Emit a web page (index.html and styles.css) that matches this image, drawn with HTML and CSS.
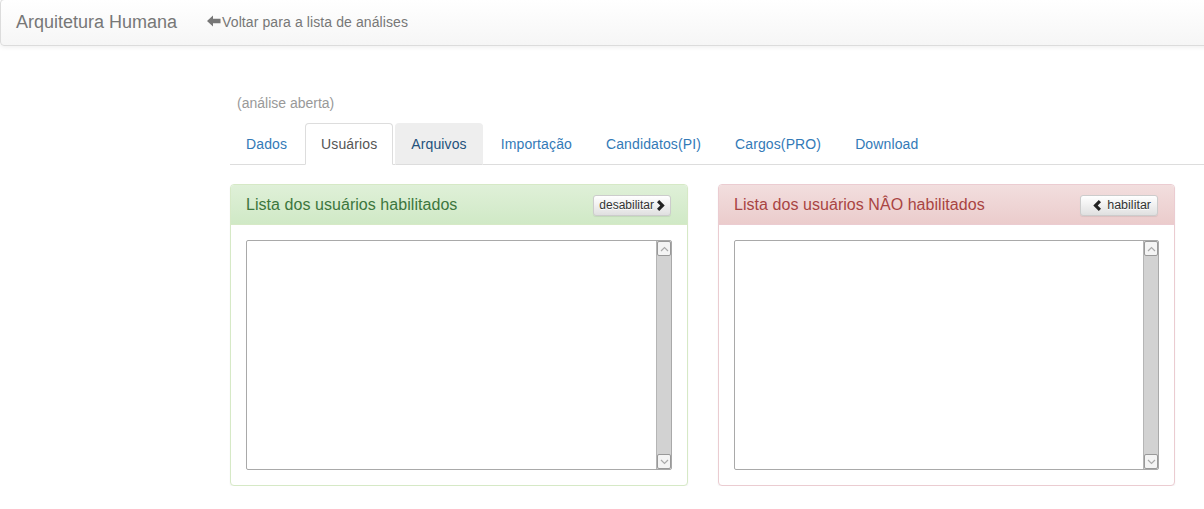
FILE: index.html
```html
<!DOCTYPE html>
<html lang="pt">
<head>
<meta charset="utf-8">
<title>Arquitetura Humana</title>
<link rel="stylesheet" href="styles.css">
</head>
<body>
<nav class="navbar">
  <a class="brand" href="#">Arquitetura Humana</a>
  <a class="back" href="#"><svg class="arrow" width="14" height="12" viewBox="0 0 14 12"><path d="M0 6 L6 0.5 L6 3.8 L13.5 3.8 L13.5 8.2 L6 8.2 L6 11.5 Z" fill="#777"/></svg>Voltar para a lista de análises</a>
</nav>
<main class="main">
  <p class="subtitle">(análise aberta)</p>
  <ul class="tabs">
    <li><a href="#">Dados</a></li>
    <li class="active"><a href="#">Usuários</a></li>
    <li class="hover"><a href="#">Arquivos</a></li>
    <li><a href="#">Importação</a></li>
    <li><a href="#">Candidatos(PI)</a></li>
    <li><a href="#">Cargos(PRO)</a></li>
    <li><a href="#">Download</a></li>
  </ul>
  <div class="panels">
    <section class="panel success">
      <div class="panel-heading">
        <h3>Lista dos usuários habilitados</h3>
        <button class="btn">desabilitar<svg width="9" height="11" viewBox="0 0 9 11"><path d="M1 2.2 L3.2 0 L8.7 5.5 L3.2 11 L1 8.8 L4.3 5.5 Z" fill="#222"/></svg></button>
      </div>
      <div class="panel-body">
        <div class="listbox">
          <div class="list-area"></div>
          <div class="scrollbar">
            <div class="sb-btn"><svg width="9" height="6" viewBox="0 0 9 6"><path d="M1 5 L4.5 1.5 L8 5" fill="none" stroke="#aaa" stroke-width="1.2"/></svg></div>
            <div class="sb-track"></div>
            <div class="sb-btn"><svg width="9" height="6" viewBox="0 0 9 6"><path d="M1 1 L4.5 4.5 L8 1" fill="none" stroke="#aaa" stroke-width="1.2"/></svg></div>
          </div>
        </div>
      </div>
    </section>
    <section class="panel danger">
      <div class="panel-heading">
        <h3>Lista dos usuários NÂO habilitados</h3>
        <button class="btn"><svg width="9" height="11" viewBox="0 0 9 11"><path d="M8 2.2 L5.8 0 L0.3 5.5 L5.8 11 L8 8.8 L4.7 5.5 Z" fill="#222"/></svg> habilitar</button>
      </div>
      <div class="panel-body">
        <div class="listbox">
          <div class="list-area"></div>
          <div class="scrollbar">
            <div class="sb-btn"><svg width="9" height="6" viewBox="0 0 9 6"><path d="M1 5 L4.5 1.5 L8 5" fill="none" stroke="#aaa" stroke-width="1.2"/></svg></div>
            <div class="sb-track"></div>
            <div class="sb-btn"><svg width="9" height="6" viewBox="0 0 9 6"><path d="M1 1 L4.5 4.5 L8 1" fill="none" stroke="#aaa" stroke-width="1.2"/></svg></div>
          </div>
        </div>
      </div>
    </section>
  </div>
</main>
</body>
</html>
```
FILE: styles.css
```css
* { box-sizing: border-box; }
html, body { margin: 0; padding: 0; overflow: hidden; }
body {
  font-family: "Liberation Sans", Arial, sans-serif;
  font-size: 14px;
  line-height: 20px;
  color: #333;
  background: #fff;
  width: 1204px;
}
a { text-decoration: none; }

.navbar {
  display: flex;
  align-items: center;
  height: 47px;
  margin: -1px -10px 0 0;
  border: 1px solid #dcdcdc;
  border-radius: 4px;
  background: linear-gradient(to bottom, #fff 0, #f6f6f6 100%);
  box-shadow: 0 1px 5px rgba(0,0,0,.075);
  padding: 0 0 2px 15px;
}
.brand {
  font-size: 18px;
  color: #777;
  line-height: 20px;
}
.back {
  margin-left: 30px;
  color: #777;
  font-size: 14px;
  display: flex;
  align-items: center;
  letter-spacing: 0.1px;
}
.arrow { margin-right: 1px; margin-top: -1px; }

.main {
  margin-left: 230px;
  padding-top: 47px;
}
.subtitle {
  margin: 0 0 10px 7px;
  color: #999;
  line-height: 20px;
}
.tabs {
  list-style: none;
  margin: 0;
  padding: 0;
  display: flex;
  border-bottom: 1px solid #ddd;
  height: 42px;
}
.tabs li { margin-right: 2px; margin-bottom: -1px; }
.tabs a {
  display: block;
  padding: 10px 15px;
  line-height: 20px;
  color: #337ab7;
  letter-spacing: 0.12px;
  border: 1px solid transparent;
  border-radius: 4px 4px 0 0;
}
.tabs .active a {
  color: #555;
  background: #fff;
  border-color: #ddd #ddd transparent;
}
.tabs .hover a {
  color: #23527c;
  background: #eee;
  border-color: #eee #eee #ddd;
}

.panels {
  display: grid;
  grid-template-columns: 458px 457px;
  column-gap: 30px;
  margin-top: 19px;
}
.panel {
  border: 1px solid;
  border-radius: 4px;
  box-shadow: 0 1px 2px rgba(0,0,0,.05);
  background: #fff;
}
.panel.success { border-color: #d6e9c6; }
.panel.danger { border-color: #ebccd1; }
.panel-heading {
  display: flex;
  align-items: center;
  justify-content: space-between;
  height: 40px;
  padding: 0 15px;
  border-bottom: 1px solid;
  border-radius: 3px 3px 0 0;
}
.success .panel-heading {
  background: linear-gradient(to bottom, #dff0d8 0, #d0e9c6 100%);
  border-color: #d6e9c6;
  color: #3c763d;
}
.danger .panel-heading {
  background: linear-gradient(to bottom, #f2dede 0, #ebcccc 100%);
  border-color: #ebccd1;
  color: #a94442;
}
.panel-heading h3 {
  margin: 0;
  font-size: 16px;
  font-weight: normal;
  line-height: 18px;
  letter-spacing: 0.05px;
}
.btn {
  font-family: "Liberation Sans", Arial, sans-serif;
  font-size: 12px;
  line-height: 17px;
  padding: 1px 5px;
  height: 21px;
  color: #333;
  border: 1px solid #ccc;
  border-radius: 3px;
  background: linear-gradient(to bottom, #fff 0, #e0e0e0 100%);
  box-shadow: inset 0 1px 0 rgba(255,255,255,.15), 0 1px 1px rgba(0,0,0,.075);
  text-shadow: 0 1px 0 #fff;
  display: flex;
  align-items: center;
  gap: 2px;
  margin-right: 1px;
  margin-top: 2px;
}
.danger .btn { padding: 1px 6px 1px 12px; gap: 5px; font-size: 12.5px; }
.panel-body { padding: 15px; }
.listbox {
  display: flex;
  height: 230px;
  border: 1px solid #a9a9a9;
  border-radius: 2px;
  background: #fff;
}
.list-area { flex: 1; }
.scrollbar {
  width: 15px;
  display: flex;
  flex-direction: column;
  background: #cfcfcf;
  border-left: 1px solid #b5b5b5;
}
.sb-btn {
  height: 15px;
  display: flex;
  align-items: center;
  justify-content: center;
  background: #f4f4f4;
  border: 1px solid #999;
  border-radius: 2px;
}
.sb-track { flex: 1; background: #d2d2d2; }
```
